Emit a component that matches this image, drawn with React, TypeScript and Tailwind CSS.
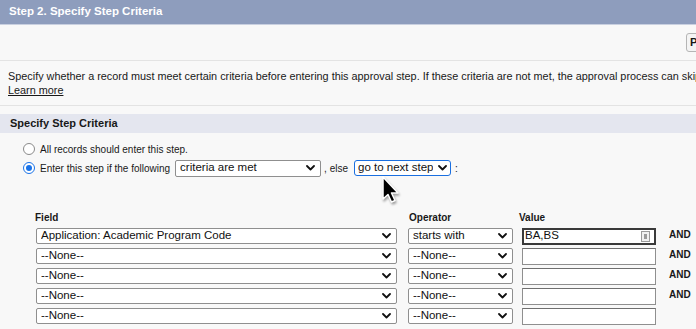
import React from "react";

const font = { fontFamily: '"Liberation Sans", Arial, sans-serif' };

function Chevron() {
    return (
        <svg width="9" height="6" viewBox="0 0 9 6" className="shrink-0">
            <path d="M1 1 L4.5 4.5 L8 1" fill="none" stroke="#111" strokeWidth="1.8" strokeLinecap="round" strokeLinejoin="round"/>
        </svg>
    );
}

function FakeSelect({text, className}: { text: string; className: string }) {
    return (
        <div className={"flex items-center justify-between bg-white border border-[#8f8f8f] rounded-[2px] pl-[4px] pr-[5px] " + className}>
            <span className="text-[#111] text-[11.5px] whitespace-nowrap overflow-hidden">{text}</span>
            <Chevron/>
        </div>
    );
}

function Cursor() {
    return (
        <svg width="24" height="30" viewBox="0 0 24 30" className="absolute left-[378px] top-[175px] drop-shadow-[1px_2px_1px_rgba(0,0,0,0.35)]">
            <path d="M5 2 L5 24 L10 19.5 L13.5 27 L17 25.5 L13.5 18 L20 18 Z" fill="#000" stroke="#fff" strokeWidth="1.5" strokeLinejoin="round"/>
        </svg>
    );
}

const rows = [
    {field: "Application: Academic Program Code", op: "starts with", value: "BA,BS", and: true},
    {field: "--None--", op: "--None--", value: "", and: true},
    {field: "--None--", op: "--None--", value: "", and: true},
    {field: "--None--", op: "--None--", value: "", and: true},
    {field: "--None--", op: "--None--", value: "", and: false},
];

export default function App() {
    return (
        <div style={font} className="relative w-[696px] h-[329px] overflow-hidden bg-[#f8f8f8] text-[#181818]">
            {/* page header */}
            <div className="h-[25px] bg-[#8e9dbd] border-b border-[#c9d0e0] flex items-center px-[9px]">
                <h1 className="text-white font-bold text-[11.5px]">Step 2. Specify Step Criteria</h1>
            </div>

            {/* toolbar */}
            <div className="h-[36px] flex justify-end pt-[8px] border-b border-[#e3e3e3]">
                <button className="h-[19px] w-[30px] -mr-[20px] shrink-0 bg-[#f4f4f4] border border-[#b5b5b5] rounded-[3px] text-[11px] font-bold text-left pl-[3px]">
                    P
                </button>
            </div>

            {/* description */}
            <div className="h-[45px] border-b border-[#e3e3e3] pt-[8px] px-[8px] text-[10.85px] leading-[14px] whitespace-nowrap">
                <p>
                    Specify whether a record must meet certain criteria before entering this approval step. If these criteria are not met, the approval process can skip
                </p>
                <a className="underline">Learn more</a>
            </div>

            {/* section */}
            <div className="mt-[8px] h-[19px] bg-[#e4e6ef] flex items-center px-[10px]">
                <h2 className="font-bold text-[11px]">Specify Step Criteria</h2>
            </div>

            <div className="mt-[8px] pl-[23px] text-[10px]">
                <label className="flex items-center h-[16px] gap-[5px]">
                    <span className="w-[12px] h-[12px] rounded-full border border-[#8a8a8a] bg-white"/>
                    All records should enter this step.
                </label>
                <div className="flex items-center h-[18px] mt-[2px]">
                    <label className="flex items-center gap-[5px]">
                        <span className="w-[12px] h-[12px] rounded-full border-[1.5px] border-[#1a73e8] bg-white flex items-center justify-center">
                            <span className="w-[6px] h-[6px] rounded-full bg-[#1a73e8]"/>
                        </span>
                        Enter this step if the following
                    </label>
                    <FakeSelect text="criteria are met" className="ml-[5px] w-[146px] h-[17px]"/>
                    <span className="ml-[3px]">, else</span>
                    <FakeSelect text="go to next step" className="ml-[6px] w-[97px] h-[16px] !pl-[3px] !pr-[3px] !border-[#1a6fe0] !border-[1.5px] !rounded-[3px]"/>
                    <span className="ml-[4px]">:</span>
                </div>
            </div>

            {/* criteria table */}
            <div className="mt-[34px] pl-[35px]">
                <div className="grid grid-cols-[362px_11px_105px_9px_134px] text-[10px] font-bold h-[14px] leading-[14px]">
                    <span>Field</span>
                    <span/>
                    <span className="pl-[1px]">Operator</span>
                    <span/>
                    <span className="-ml-[3px]">Value</span>
                </div>
                <div className="flex flex-col gap-[4px] mt-[3px] pl-[1px]">
                    {rows.map((r, i) => (
                        <div key={i} className="flex items-center h-[16px]">
                            <FakeSelect text={r.field} className="w-[361px] h-[16px]"/>
                            <FakeSelect text={r.op} className="ml-[11px] w-[105px] h-[16px]"/>
                            {r.value ? (
                                <div className="ml-[9px] w-[134px] h-[17px] bg-white border-2 border-[#3a3a3a] flex items-center justify-between pl-[1px] pr-[4px]">
                                    <span className="text-[11.5px] text-[#111]">{r.value}</span>
                                    <span className="w-[9px] h-[11px] border border-[#9a9a9a] bg-[#f0f0f0] flex items-center justify-center">
                                        <span className="w-[3px] h-[5px] bg-[#9a9a9a]"/>
                                    </span>
                                </div>
                            ) : (
                                <div className="ml-[9px] w-[134px] h-[17px] bg-white border border-[#8f8f8f] border-t-[#6f6f6f]"/>
                            )}
                            {r.and && <span className="ml-[13px] text-[10px] font-bold -mt-[3px]">AND</span>}
                        </div>
                    ))}
                </div>
            </div>

            <Cursor/>
        </div>
    );
}
